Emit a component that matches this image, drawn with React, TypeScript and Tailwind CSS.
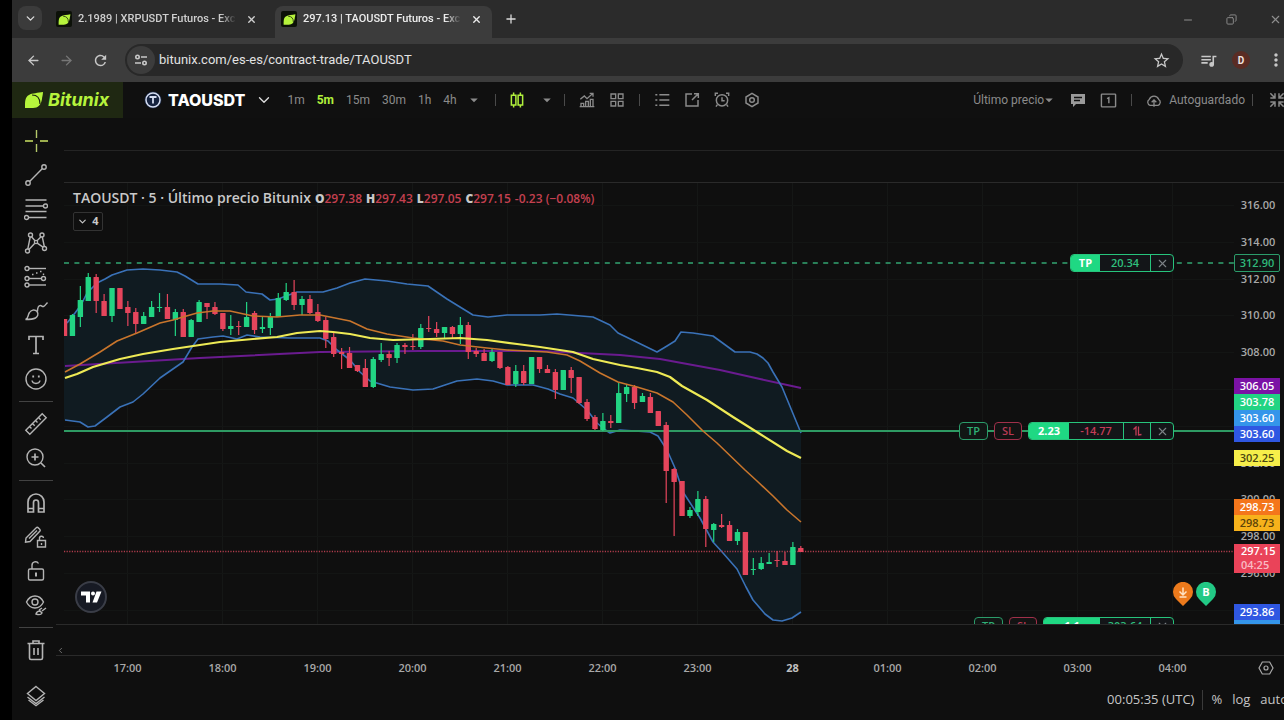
import { ReactNode, useState } from "react";
import { ArrowLeft, ArrowRight, ChevronDown, ChevronLeft, Copy, Minus, Plus, X } from "lucide-react";
import { MdArrowDropDown, MdMoreVert, MdQueueMusic, MdRefresh, MdStarOutline } from "react-icons/md";

type Candle = [number, number, number, number, number];

// maximo, techo del cuerpo, base del cuerpo, minimo, 1 = alcista
const candles: Candle[] = [
    [319, 319, 336, 336, 0], [314, 315, 336, 336, 1], [286, 300, 317, 327, 1], [273, 277, 301, 301, 1],
    [274, 277, 301, 313, 0], [294, 301, 316, 316, 0], [288, 288, 316, 322, 1], [288, 288, 309, 309, 0],
    [301, 307, 313, 326, 0], [308, 312, 324, 333, 0], [312, 316, 324, 324, 1], [301, 307, 317, 317, 1],
    [293, 307, 308, 312, 1], [294, 307, 319, 319, 0], [309, 312, 320, 336, 1], [309, 312, 337, 337, 0],
    [319, 320, 337, 337, 1], [300, 302, 322, 322, 1], [303, 303, 307, 319, 0], [302, 307, 314, 315, 0],
    [313, 313, 329, 331, 0], [315, 326, 329, 335, 1], [321, 326, 327, 335, 0], [302, 317, 327, 327, 1],
    [311, 313, 330, 334, 0], [316, 327, 329, 333, 1], [313, 317, 328, 335, 1], [293, 298, 317, 317, 1],
    [283, 292, 300, 301, 1], [280, 292, 305, 310, 0], [296, 299, 305, 315, 1], [295, 299, 313, 314, 0],
    [304, 312, 321, 322, 0], [317, 320, 339, 348, 0], [333, 337, 354, 357, 0], [348, 352, 354, 369, 0],
    [347, 353, 368, 368, 0], [365, 365, 371, 372, 0], [359, 368, 387, 387, 0], [357, 359, 387, 388, 1],
    [343, 354, 360, 362, 1], [351, 354, 358, 366, 0], [343, 345, 358, 363, 1], [343, 345, 347, 354, 0],
    [334, 346, 347, 350, 0], [324, 328, 347, 349, 1], [316, 328, 329, 332, 0], [322, 329, 333, 337, 0],
    [327, 327, 333, 338, 1], [326, 327, 334, 338, 0], [317, 325, 334, 344, 1], [322, 325, 352, 359, 0],
    [348, 351, 354, 357, 0], [349, 353, 361, 361, 0], [349, 352, 361, 362, 1], [352, 352, 368, 369, 0],
    [366, 367, 385, 385, 0], [365, 371, 384, 387, 1], [365, 371, 383, 385, 0], [357, 357, 384, 384, 1],
    [357, 357, 369, 373, 0], [365, 369, 373, 373, 0], [369, 372, 390, 399, 0], [370, 370, 390, 390, 1],
    [367, 370, 378, 393, 0], [377, 377, 403, 404, 0], [399, 402, 419, 421, 0], [415, 417, 429, 430, 0],
    [413, 421, 430, 431, 1], [415, 421, 423, 428, 0], [383, 393, 423, 423, 1], [384, 387, 394, 402, 1],
    [385, 387, 403, 409, 0], [393, 396, 402, 402, 1], [393, 397, 413, 413, 0], [411, 411, 426, 426, 0],
    [422, 425, 471, 503, 0], [468, 469, 482, 536, 0], [481, 481, 516, 516, 0], [507, 510, 516, 518, 1],
    [491, 499, 512, 516, 1], [496, 499, 529, 547, 0], [523, 524, 530, 542, 1], [514, 525, 527, 528, 0],
    [521, 525, 541, 541, 0], [529, 532, 541, 545, 1], [532, 532, 575, 575, 0], [558, 569, 570, 575, 1],
    [557, 563, 569, 570, 1], [553, 562, 564, 564, 1], [551, 560, 561, 567, 0], [552, 561, 565, 565, 0],
    [542, 547, 565, 565, 1], [546, 548, 552, 552, 0],
];

const upperBand = "67,323 75,313 81,305 87,293 97,283 105,279 112,275 127,270 143,269 160,270 177,272 185,276 198,284 220,284 238,285 246,292 262,294 270,300 278,299 297,292 323,292 337,288 350,283 365,279 387,281 407,284 428,286 447,299 473,315 488,317 507,315 540,315 557,314 593,317 610,325 618,333 657,352 667,346 675,341 681,332 693,333 713,336 735,352 750,352 757,354 763,358 768,363 773,372 782,387 801,433";
const lowerBand = "65,420 80,422 88,427 95,426 107,417 120,407 133,402 143,394 160,378 183,362 192,347 198,339 213,337 223,336 237,339 247,335 260,337 290,338 320,338 328,341 337,350 350,360 360,372 370,381 390,387 413,390 433,389 457,381 477,379 493,381 507,385 533,385 548,389 560,394 573,398 587,410 597,423 604,429 610,433 620,430 650,432 658,436 667,450 675,468 683,492 700,518 713,542 723,553 737,569 746,587 753,600 765,614 773,620 782,621 792,618 801,612";
const orangeLine = "65,372 80,364 100,352 117,341 137,333 160,323 173,320 183,317 197,313 213,311 230,311 253,316 277,317 300,315 320,315 350,321 367,329 387,334 413,338 443,341 460,345 487,348 507,350 547,352 567,355 580,361 600,373 618,382 637,387 657,393 673,402 687,415 703,431 717,443 745,470 757,481 773,496 787,510 801,522";
const yellowLine = "65,378 77,374 93,367 120,359 143,354 173,349 220,342 253,339 277,337 297,333 320,331 333,332 350,334 370,338 393,340 430,339 460,338 487,340 517,344 540,347 573,352 593,359 620,365 637,368 657,372 670,377 682,386 707,400 733,417 760,434 787,451 801,458";
const purpleLine = "65,366 200,358 320,352 420,351 540,351 620,355 660,359 720,370 760,379 801,388";

const horas = ["17:00", "18:00", "19:00", "20:00", "21:00", "22:00", "23:00", "28", "01:00", "02:00", "03:00", "04:00"];
const precios = [316, 314, 312, 310, 308, 306, 304, 302, 300, 298, 296, 294];

const toY = (precio: number) => Math.round(22 + (316 - precio) * 18.4);

const Icon = ({ children, size = 24, width = 1.4 }: { children: ReactNode; size?: number; width?: number }) => (
    <svg width={size} height={size} viewBox="0 0 24 24" fill="none" stroke="currentColor" strokeWidth={width}>
        {children}
    </svg>
);

const Leaf = ({ size }: { size: number }) => (
    <svg width={size} height={size} viewBox="0 0 20 20" fill="#b6f43c">
        <path d="M1 18C1 11 1 7 5 5c3-2 9-2 14-3 0 3-1 5-1 7-1 6-4 9-9 9H1z" />
        <path d="M8 5c5 0 8 3 8 9" stroke="#1c2410" strokeWidth="1.2" fill="none" />
    </svg>
);

const herramientas: { nombre: string; icono: ReactNode; separador?: boolean }[] = [
    {
        nombre: "Cruz",
        icono: <><path d="M12.5 1v8M12.5 15v8" stroke="#b5c96a" /><path d="M1 12h8M16 12h8" stroke="#9cae4e" strokeWidth="2" /></>,
    },
    { nombre: "Línea de tendencia", icono: <><circle cx="4" cy="20" r="2.2" /><circle cx="20" cy="4" r="2.2" /><path d="M5.6 18.4 18.4 5.6" /></> },
    {
        nombre: "Retroceso de Fibonacci",
        icono: <><path d="M1.5 3h21M1.5 9h18M1.5 14.5h21M4.5 20.5h18" /><circle cx="21.5" cy="9" r="2" /><circle cx="2.5" cy="20.5" r="2" /></>,
    },
    {
        nombre: "Patrones",
        icono: <><circle cx="6.5" cy="4" r="2" /><circle cx="18" cy="4" r="2" /><circle cx="12" cy="11" r="1.6" /><circle cx="3.5" cy="20" r="2" /><circle cx="20.5" cy="17.5" r="2" /><path d="M6.2 6 3.8 18M7.5 5.8 11 9.8M17 5.8 13 9.8M18.3 6l2 9.5M10.8 12.2 5 18.5M13.2 12.2l5.8 4" /></>,
    },
    {
        nombre: "Predicción",
        icono: <><circle cx="3" cy="3.5" r="2" /><path d="M5 3.5h17" /><circle cx="3" cy="13.5" r="2" /><circle cx="19.5" cy="13.5" r="2" /><path d="M5 13.5h12.5" /><circle cx="3" cy="20" r="2" /><path d="M5 20h17" /><path d="M8 9.5h1.5M12 8h1.5M16 6.5h1.5M19.5 8.5V10" /></>,
    },
    {
        nombre: "Pincel",
        icono: <path d="M1.5 20.5c3-1 2-4 4-7 1.5-2.5 5-3.5 7.5-1 2 2.5.5 5.5-1.5 6.5-3 1.5-6.5 1.5-10 1.5zM13.5 12.5c0-3 .5-6 3-6 1.5 0 1.5 1.5 3 1 1.5-.5 2.5-2.5 4-4" />,
    },
    { nombre: "Texto", icono: <path d="M5 7V3.5h14V7M12 3.5v17M9 20.5h6" strokeWidth="1.7" /> },
    {
        nombre: "Iconos",
        icono: <><circle cx="12" cy="12" r="10" /><path d="M8 13.5c.7 4 7.3 4 8 0" /><path d="M8.3 9.5h1.8M13.9 9.5h1.8" strokeWidth="2" /></>,
        separador: true,
    },
    {
        nombre: "Medir",
        icono: <path d="M1.8 18.2 18.2 1.8l4 4L5.8 22.2zM5.5 14.5l2 2M8.5 11.5l2.2 2.2M11.5 8.5l2 2M14.5 5.5l2.2 2.2" />,
    },
    {
        nombre: "Acercar",
        icono: <><circle cx="11" cy="11" r="8" /><path d="m17 17 4 4M11 7.5v7M7.5 11h7" strokeWidth="1.7" /></>,
        separador: true,
    },
    {
        nombre: "Imán",
        icono: <path d="M4 21V11a8 8 0 0 1 16 0v10h-5.5v-9.5a2.5 2.5 0 0 0-5 0V21zM4 17.5h5.5M14.5 17.5H20" strokeWidth="1.7" />,
    },
    {
        nombre: "Permanecer en modo dibujo",
        icono: <><path d="M2 13 12.5 2.5c1-1 4.5 2.5 3.5 3.5L6 16.5l-4.5.7zM5 13.5l8-8" /><path d="M13.5 15.5h8V22h-8zM15.5 15.5v-2a2 2 0 0 1 4-.5M17.5 18v2" /></>,
    },
    {
        nombre: "Bloquear dibujos",
        icono: <><rect x="4.5" y="10" width="15" height="11" rx="1.5" /><path d="M8 10V6.5a3.5 3.5 0 0 1 6.5-2" /><path d="M12 13.5v4" strokeWidth="2" /></>,
    },
    {
        nombre: "Ocultar dibujos",
        icono: <><path d="M2.5 9c4-8 13-8 17 0-4 8-13 8-17 0z" /><circle cx="11" cy="9" r="3" /><path d="M12 21c.5-2 2-3 4-3l2 2c-1 2-3 2-6 1zM18 18l4-3M15 17l3-2" /></>,
        separador: true,
    },
    {
        nombre: "Eliminar",
        icono: <path d="M3.5 5.5h17M5.5 5.5V20A1.5 1.5 0 0 0 7 21.5h10a1.5 1.5 0 0 0 1.5-1.5V5.5M9 5.5V3h6v2.5M10 10v7M14 10v7" strokeWidth="1.6" />,
    },
];

const Separator = () => <span className="block h-3 w-px bg-[#4a4a4a]" />;

const Tab = ({ titulo, activa }: { titulo: string; activa?: boolean }) => (
    <div className={activa ? "flex h-8 w-[217px] items-center gap-1.5 rounded-t-lg bg-[#3c3c3c] px-1.5 pb-1.5 text-[#ececec]" : "flex h-8 w-[217px] items-center gap-1.5 px-1.5 pb-1.5 text-[#cfcfcf]"}>
        <span className="flex size-4 shrink-0 items-center justify-center rounded-xs bg-[#0c1108]"><Leaf size={13} /></span>
        <span className="min-w-0 flex-1 overflow-hidden mask-r-from-90% text-[11px] font-medium whitespace-nowrap">{titulo}</span>
        <button aria-label="Cerrar pestaña" className="mr-1 ml-1 shrink-0"><X size={11} strokeWidth={3} /></button>
    </div>
);

const Browser = () => (
    <div className="font-[Roboto,'Noto_Sans',sans-serif]">
        <div className="flex h-[38px] items-end bg-[#2b2b2b]">
            <button aria-label="Buscar pestañas" className="mb-2 ml-1.5 flex size-6 items-center justify-center rounded-lg bg-[#3b3b3b] text-[#dcdcdc]">
                <ChevronDown size={13} strokeWidth={2.5} />
            </button>
            <div className="ml-2"><Tab titulo="2.1989 | XRPUSDT Futuros - Exchange" /></div>
            <div className="ml-2"><Tab titulo="297.13 | TAOUSDT Futuros - Exchange" activa /></div>
            <button aria-label="Nueva pestaña" className="mb-3 ml-3 text-[#dcdcdc]"><Plus size={14} strokeWidth={2.2} /></button>
            <div className="mb-3 ml-auto flex gap-8 text-[#8f8f8f]">
                <button aria-label="Minimizar"><Minus size={12} strokeWidth={2} /></button>
                <button aria-label="Restaurar"><Copy size={11} strokeWidth={2} className="-scale-x-100" /></button>
                <button aria-label="Cerrar" className="mr-0.5"><X size={13} strokeWidth={2} /></button>
            </div>
        </div>
        <div className="flex h-11 items-center bg-[#3c3c3c] pl-3.5 text-[#c8c8c8]">
            <button aria-label="Atrás"><ArrowLeft size={15} strokeWidth={2.2} /></button>
            <button aria-label="Adelante" className="ml-[18px] text-[#777]"><ArrowRight size={15} strokeWidth={2.2} /></button>
            <button aria-label="Recargar" className="mr-4 ml-[18px]"><MdRefresh size={17} /></button>
            <div className="flex h-8 flex-1 items-center gap-2 rounded-full bg-[#282828] pr-3 pl-0.5">
                <button aria-label="Información del sitio" className="flex size-7 items-center justify-center rounded-full bg-[#3c3c3c]">
                    <svg width="14" height="14" viewBox="0 0 14 14" fill="none" stroke="currentColor" strokeWidth="1.6">
                        <circle cx="3.5" cy="4" r="1.7" /><path d="M7 4h6M1 10h6" /><circle cx="10.5" cy="10" r="1.7" />
                    </svg>
                </button>
                <input aria-label="Dirección" defaultValue="bitunix.com/es-es/contract-trade/TAOUSDT" className="-ml-1 min-w-0 flex-1 bg-transparent text-[13px] text-[#e2e2e2] outline-none" />
                <button aria-label="Favorito"><MdStarOutline size={19} /></button>
            </div>
            <button aria-label="Multimedia" className="ml-4"><MdQueueMusic size={19} /></button>
            <button aria-label="Perfil" className="ml-3.5 flex size-[18px] items-center justify-center rounded-full bg-[#5a2c24] text-[10px] font-bold text-[#f0e4e0]">D</button>
            <button aria-label="Menú" className="-mr-0.5 ml-4"><MdMoreVert size={20} /></button>
        </div>
    </div>
);

const Header = () => {
    const [intervalo, setIntervalo] = useState("5m");

    return (
        <header className="flex h-9 items-center overflow-hidden bg-[#101010] font-[Roboto,sans-serif] text-[12px] text-[#8b8b8b]">
            <a href="#" className="flex h-full w-[111px] shrink-0 items-center gap-1 bg-[#1f2812] pl-3 font-[Inter,sans-serif] text-lg font-bold text-[#b6f43c] italic">
                <Leaf size={20} />Bitunix
            </a>
            <button className="ml-[21px] flex items-center gap-1.5 font-[Inter,sans-serif] font-extrabold text-white">
                <svg width="18" height="18" viewBox="0 0 18 18" fill="none" stroke="#d5ddf0">
                    <circle cx="9" cy="9" r="8.5" fill="#16233f" stroke="none" />
                    <circle cx="9" cy="9" r="7" strokeWidth="1.5" /><path d="M5.5 6h7M9 6v6.5" strokeWidth="1.8" />
                </svg>
                <span className="text-base">TAOUSDT</span>
                <ChevronDown size={18} strokeWidth={1.8} className="ml-1 text-[#ddd]" />
            </button>
            <div className="ml-3.5 flex gap-3">
                {["1m", "5m", "15m", "30m", "1h", "4h"].map((item) => (
                    <button
                        key={item}
                        onClick={() => setIntervalo(item)}
                        className={item === intervalo ? "font-bold text-[#b0f03c]" : ""}
                    >
                        {item}
                    </button>
                ))}
            </div>
            <div className="ml-2 flex items-center gap-3">
                <button aria-label="Más intervalos"><MdArrowDropDown size={18} /></button>
                <Separator />
                <button aria-label="Tipo de gráfico" className="text-[#b0f03c]">
                    <Icon size={18} width={2}><path d="M7.5 2v3.5M7.5 18.5V22M16.5 2v3.5M16.5 18.5V22M4.5 5.5h6v13h-6zM13.5 5.5h6v13h-6z" /></Icon>
                </button>
                <button aria-label="Más tipos"><MdArrowDropDown size={18} /></button>
            </div>
            <div className="ml-2 flex items-center gap-3.5">
                <Separator />
                <button aria-label="Indicadores"><Icon size={16} width={2}><path d="M3 22v-5h4v5zM10 22v-8h4v8zM17 22V11h4v11zM1 22h22M2 11l6-5 4 4 9-8M16 2h5v5" /></Icon></button>
                <button aria-label="Plantillas"><Icon size={16} width={2}><path d="M3 3h7v7H3zM14 3h7v7h-7zM3 14h7v7H3zM14 14h7v7h-7z" /></Icon></button>
                <Separator />
                <button aria-label="Órdenes"><Icon size={16} width={2.2}><path d="M8 4h15M8 12h15M8 20h15M2 4h3M2 12h3M2 20h3" /></Icon></button>
                <button aria-label="Compartir"><Icon size={16} width={2.2}><path d="M12 3H3v18h18v-9M15 2.5h6.5V9M21 3l-9 9" /></Icon></button>
                <button aria-label="Alertas"><Icon size={16} width={2.2}><circle cx="12" cy="12.5" r="8.5" /><path d="M12 8v5h4M2 6V2h4M22 6V2h-4M5 19l-2 3M19 19l2 3" /></Icon></button>
                <button aria-label="Ajustes"><Icon size={16} width={2.2}><path d="M12 2l9 5.5v9L12 22l-9-5.5v-9z" /><circle cx="12" cy="12" r="3.5" /></Icon></button>
            </div>
            <div className="ml-auto flex shrink-0 items-center">
                <button className="flex items-center">Último precio<MdArrowDropDown size={18} className="-ml-1" /></button>
                <button aria-label="Comentarios" className="ml-3 text-[#9a9a9a]">
                    <svg width="16" height="16" viewBox="0 0 16 16" fill="currentColor"><path d="M1 2h14v10H6l-3 3v-3H1z" /><path d="M4 5.5h8M4 8.5h6" stroke="#101010" strokeWidth="1.3" /></svg>
                </button>
                <button aria-label="Diseño" className="ml-3.5"><Icon size={17} width={2}><rect x="2" y="3" width="20" height="18" rx="1" /><path d="M10 9.5 12.5 8v8" /></Icon></button>
                <span className="mx-3.5"><Separator /></span>
                <button className="flex items-center gap-[7px]">
                    <Icon size={16} width={2}><path d="M6 20a5 5 0 0 1-1-9 7.5 7.5 0 0 1 14 0 5 5 0 0 1-1 9zM12 22v-9M8.5 15.5 12 12l3.5 3.5" /></Icon>
                    Autoguardado
                </button>
                <span className="mr-4 ml-[7px]"><Separator /></span>
                <button aria-label="Salir de pantalla completa" className="-mr-px"><Icon size={16} width={2.2}><path d="M9 2v7H2M15 2v7h7M9 22v-7H2M15 22v-7h7M9 9 2 2M15 9l7-7M9 15l-7 7M15 15l7 7" /></Icon></button>
            </div>
        </header>
    );
};

const Toolbar = () => (
    <nav className="flex w-12 shrink-0 flex-col items-center pt-1.5 text-[#b4b4b4]">
        {herramientas.map((item) => (
            <div key={item.nombre} className="flex flex-col items-center">
                <button aria-label={item.nombre} className="flex h-[34px] w-10 items-center justify-center"><Icon>{item.icono}</Icon></button>
                {item.separador && <hr className="my-[5px] h-px w-[34px] border-0 bg-[#424242]" />}
            </div>
        ))}
        <button aria-label="Capas" className="mt-3 flex h-[34px] w-10 items-center justify-center">
            <Icon><path d="m12 2.5 8.5 7-8.5 7-8.5-7zM3.5 13l8.5 6.5 8.5-6.5M4.5 16l7.5 5.7 7.5-5.7" /></Icon>
        </button>
    </nav>
);

const Plot = () => (
    <svg className="block h-full w-full">
        {horas.map((hora, i) => (
            <line key={hora} x1={63.5 + i * 95} x2={63.5 + i * 95} y1="0" y2="100%" stroke="#151716" />
        ))}
        {precios.map((precio) => (
            <line key={precio} x1="0" x2="100%" y1={toY(precio) + 0.5} y2={toY(precio) + 0.5} stroke="#131514" />
        ))}
        <g transform="translate(-64 -183)" fill="none" strokeLinejoin="round">
            <polygon points={`64,328 ${upperBand} ${lowerBand.split(" ").reverse().join(" ")} 64,420`} fill="#101b21" />
            <polyline points={purpleLine} stroke="#6a1b8f" strokeWidth="2" />
            <polyline points={upperBand} stroke="#3a72b8" strokeWidth="1.6" />
            <polyline points={lowerBand} stroke="#3a72b8" strokeWidth="1.6" />
        </g>
        <line x1="0" x2="100%" y1="80" y2="80" stroke="#33a572" strokeWidth="1.5" strokeDasharray="5 5.4" />
        <line x1="0" x2="100%" y1="248" y2="248" stroke="#2e9a63" strokeWidth="1.8" />
        <line x1="0" x2="100%" y1="368.5" y2="368.5" stroke="#b03c4c" strokeWidth="1.5" strokeDasharray="1.2 1.4" />
        <g transform="translate(-64 -183)" fill="none" strokeLinejoin="round">
            {candles.map(([high, top, bottom, low, up], i) => {
                const x = 800.8 - (candles.length - 1 - i) * 7.917;
                const color = up ? "#22d483" : "#e5455c";
                return (
                    <g key={i} fill={color}>
                        <rect x={x - 0.6} y={high} width="1.2" height={low - high} />
                        <rect x={x - 2.7} y={top} width="5.4" height={bottom - top} rx="0.5" />
                    </g>
                );
            })}
            <polyline points={orangeLine} stroke="#c8752c" strokeWidth="1.6" />
            <polyline points={yellowLine} stroke="#eeea55" strokeWidth="2.2" />
        </g>
    </svg>
);

const SmallTag = ({ children, rojo }: { children: string; rojo?: boolean }) => (
    <button className={rojo ? "h-[18px] w-7 rounded-sm border border-[#a0304a] bg-[#131313] leading-4 font-semibold text-[#b83a54]" : "h-[18px] w-[29px] rounded-sm border border-[#2b9c6a] bg-[#111614] leading-4 font-semibold text-[#2fae76]"}>
        {children}
    </button>
);

const OrderTag = ({ cantidad, valor, perdida, invertir, ancho }: { cantidad: string; valor: string; perdida?: boolean; invertir?: boolean; ancho: string }) => (
    <div className="flex h-[18px] overflow-hidden rounded-sm border border-[#27c47c] bg-[#131518] leading-4 font-semibold">
        <span className={`${ancho} bg-[#1fd883] text-center font-bold text-white`}>{cantidad}</span>
        <span className={perdida ? "w-[54px] text-center text-[#c53d57]" : "w-[50px] text-center text-[#2fbf7d]"}>{valor}</span>
        {invertir && (
            <button aria-label="Invertir" className="flex w-[27px] items-center justify-center border-l border-[#27c47c] text-[#c53d57]">
                <svg width="9" height="10" viewBox="0 0 9 10" fill="none" stroke="currentColor" strokeWidth="1.3"><path d="M.5 3.5 3 1v8.5M5.500.5V9l3-.5" /></svg>
            </button>
        )}
        <button aria-label="Cerrar orden" className="flex w-[23px] items-center justify-center border-l border-[#27c47c] text-[#7b8185]"><X size={13} /></button>
    </div>
);

const Chart = () => (
    <div className="relative h-[441px] min-w-0 flex-1 overflow-hidden text-[11px]">
        <Plot />
        <div className="absolute top-1.5 left-[9px] whitespace-nowrap">
            <div className="flex items-baseline gap-1 text-[12px] leading-[18px] font-semibold text-[#c4404f]">
                <h1 className="text-[14px] text-[#c9c9c9]">TAOUSDT · 5 · Último precio Bitunix</h1>
                <span><b className="text-[#c9c9c9]">O</b>297.38</span>
                <span><b className="text-[#c9c9c9]">H</b>297.43</span>
                <span><b className="text-[#c9c9c9]">L</b>297.05</span>
                <span><b className="text-[#c9c9c9]">C</b>297.15</span>
                <span>-0.23 (−0.08%)</span>
            </div>
            <button className="mt-1 flex h-[19px] w-[30px] items-center justify-center gap-1 rounded-xs border border-[#333] font-bold text-[#c9c9c9]">
                <ChevronDown size={11} strokeWidth={2.5} />4
            </button>
        </div>
        <div className="absolute top-[71px] right-[60px]"><OrderTag cantidad="TP" valor="20.34" ancho="w-[29px]" /></div>
        <div className="absolute top-[239px] right-[60px] flex gap-1.5">
            <SmallTag>TP</SmallTag>
            <SmallTag rojo>SL</SmallTag>
            <OrderTag cantidad="2.23" valor="-14.77" ancho="w-10" perdida invertir />
        </div>
        <div className="absolute top-[434px] right-[60px] flex gap-1.5">
            <SmallTag>TP</SmallTag>
            <SmallTag rojo>SL</SmallTag>
            <OrderTag cantidad="1.1" valor="303.64" ancho="w-[56px]" />
        </div>
        <div className="absolute right-[18px] bottom-[18px] flex gap-[3px]">
            <svg width="20" height="24" viewBox="0 0 20 24" fill="none" stroke="#ffe3c4" strokeWidth="1.5">
                <path d="M10 24 3 17A10 10 0 1 1 17 17z" fill="#ec7a1c" stroke="none" />
                <path d="M10 5.5v7M6.5 9.5 10 13l3.5-3.5M6.5 15h7" />
            </svg>
            <svg width="20" height="24" viewBox="0 0 20 24">
                <path d="M10 24 3 17A10 10 0 1 1 17 17z" fill="#22c985" />
                <text x="10" y="14" textAnchor="middle" fontSize="11" fontWeight="700" fill="#fff">B</text>
            </svg>
        </div>
        <a href="#" aria-label="TradingView" className="absolute bottom-[11px] left-[11px] flex size-8 items-center justify-center rounded-full border-2 border-[#3a3d47] bg-[#171a24]">
            <svg width="22" height="14" viewBox="0 0 22 14" fill="#fff"><path d="M1 1.5h9v11H6v-7H1zM16.5 1.5h5l-4.5 11h-4.5z" /><circle cx="13" cy="3.5" r="2" /></svg>
        </a>
    </div>
);

const PriceTag = ({ color, children }: { color: string; children?: ReactNode }) => (
    <div className={`${color} h-4 w-full leading-4`}>{children}</div>
);

const PriceAxis = () => (
    <div className="relative w-[50px] shrink-0 overflow-hidden text-[11px] font-semibold text-[#a8a8a8]">
        {precios.map((precio) => (
            <span key={precio} className="absolute left-0 w-12 -translate-y-1/2 text-center leading-4" style={{ top: toY(precio) }}>
                {precio.toFixed(2)}
            </span>
        ))}
        <div className="absolute top-[71px] left-0 h-[18px] w-[46px] rounded-xs border border-[#2b9c6a] bg-[#101513] text-center leading-4 text-[#2fb87a]">312.90</div>
        <div className="absolute top-[195px] left-0 w-[46px] text-center text-white">
            <PriceTag color="bg-[#7b12a5]">306.05</PriceTag>
            <PriceTag color="bg-[#22d483]">303.78</PriceTag>
            <PriceTag color="bg-[#3495ea]">303.60</PriceTag>
            <PriceTag color="bg-[#2f57e2]">303.60</PriceTag>
        </div>
        <div className="absolute top-[267px] left-0 w-[46px] text-center">
            <PriceTag color="bg-[#f6ee4a] text-[#4a4710]">302.25</PriceTag>
        </div>
        <div className="absolute top-[316px] left-0 w-[46px] text-center">
            <PriceTag color="bg-[#f4761b] text-white">298.73</PriceTag>
            <PriceTag color="bg-[#f7b21b] text-[#5c430a]">298.73</PriceTag>
        </div>
        <div className="absolute top-[361px] left-0 w-[46px] bg-[#ea4359] pb-px pl-[7px] leading-[14px] text-white">
            <div>297.15</div>
            <div className="text-[#f9bcc4]">04:25</div>
        </div>
        <div className="absolute top-[421px] left-0 w-[46px] text-center text-white">
            <PriceTag color="bg-[#2f57e2]">293.86</PriceTag>
            <PriceTag color="bg-[#3495ea]" />
        </div>
    </div>
);

const App = () => {
    return (
        <div className="min-h-screen overflow-hidden bg-black pl-3">
            <Browser />
            <Header />
            <main className="flex bg-[#0f0f0f] font-['Open_Sans','Noto_Sans',sans-serif]">
                <Toolbar />
                <div className="ml-1 min-w-0 flex-1">
                    <div className="h-[33px] border-b border-[#242424]" />
                    <div className="h-8 border-b border-[#2a2a2a]" />
                    <div className="flex">
                        <Chart />
                        <PriceAxis />
                    </div>
                    <div className="-ml-2 flex h-8 items-center border-t border-b border-[#2a2a2a] pt-5">
                        <button aria-label="Contraer panel" className="text-[#8a8a8a]"><ChevronLeft size={9} /></button>
                    </div>
                    <div className="flex h-6 items-center pl-4 text-[11px] font-semibold text-[#a8a8a8]">
                        {horas.map((hora) => (
                            <span key={hora} className={hora === "28" ? "w-[95px] text-center font-bold text-[#c0c0c0]" : "w-[95px] text-center"}>{hora}</span>
                        ))}
                        <button aria-label="Configuración del eje" className="mr-2.5 ml-auto"><Icon size={16} width={1.8}><path d="M6.5 3h11l5 9-5 9h-11l-5-9z" /><circle cx="12" cy="12" r="3" /></Icon></button>
                    </div>
                    <div className="flex h-10 items-center justify-end overflow-hidden text-[13px] font-medium text-[#c6c6c6]">
                        <span>00:05:35 (UTC)</span>
                        <span className="mx-2 h-5 w-px bg-[#3a3a3a]" />
                        <button>%</button>
                        <button className="mx-2.5">log</button>
                        <button className="-mr-1">auto</button>
                    </div>
                </div>
            </main>
        </div>
    );
};

export default App;
